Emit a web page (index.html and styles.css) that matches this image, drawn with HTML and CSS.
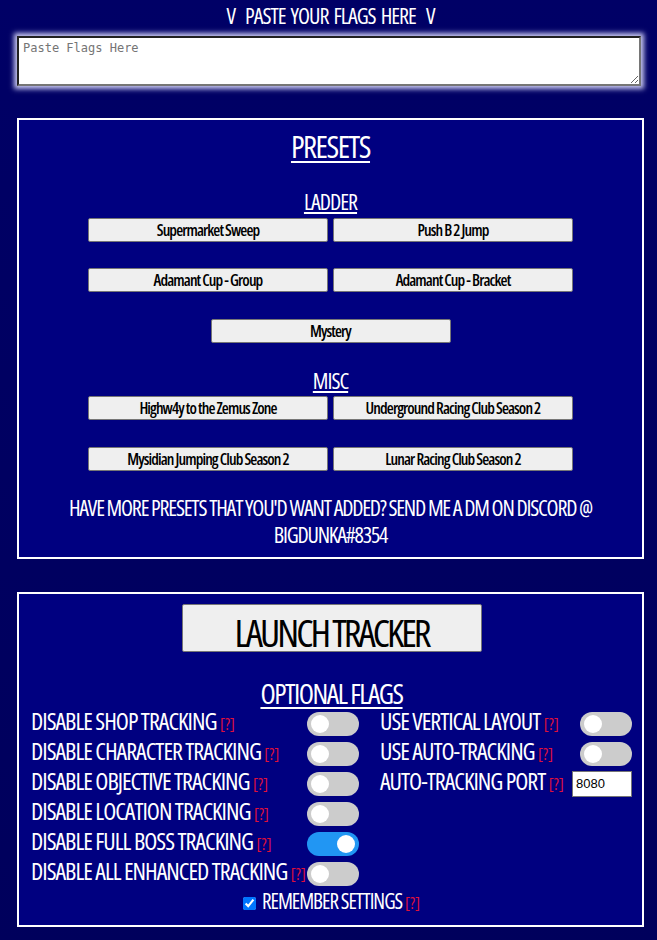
FILE: index.html
```html
<!DOCTYPE html>
<html lang="en">
<head>
    <meta charset="UTF-8">
    <meta name="viewport" content="width=device-width, initial-scale=1.0">
    <title>Tracker Launcher</title>
    <link rel="stylesheet" href="styles.css">
</head>
<body>
    <div class="paste-title">V&nbsp; PASTE YOUR FLAGS HERE &nbsp;V</div>
    <textarea class="flags-input" placeholder="Paste Flags Here"></textarea>

    <!-- presets -->
    <div class="panel presets">
        <h1>PRESETS</h1>

        <h2>LADDER</h2>
        <div class="preset-group">
            <div class="preset-row">
                <button class="preset-btn">Supermarket Sweep</button>
                <button class="preset-btn">Push B 2 Jump</button>
            </div>
            <div class="preset-row">
                <button class="preset-btn">Adamant Cup - Group</button>
                <button class="preset-btn">Adamant Cup - Bracket</button>
            </div>
            <div class="preset-row">
                <button class="preset-btn">Mystery</button>
            </div>
        </div>

        <h2>MISC</h2>
        <div class="preset-group">
            <div class="preset-row">
                <button class="preset-btn">Highw4y to the Zemus Zone</button>
                <button class="preset-btn">Underground Racing Club Season 2</button>
            </div>
            <div class="preset-row">
                <button class="preset-btn">Mysidian Jumping Club Season 2</button>
                <button class="preset-btn">Lunar Racing Club Season 2</button>
            </div>
        </div>

        <p class="more-presets">HAVE MORE PRESETS THAT YOU'D WANT ADDED? SEND ME A DM ON DISCORD @ BIGDUNKA#8354</p>
    </div>

    <!-- launch + options -->
    <div class="panel launcher">
        <button class="launch-btn">LAUNCH TRACKER</button>

        <h1 class="flags-title">OPTIONAL FLAGS</h1>

        <div class="options">
            <div class="option-col">
                <div class="option">
                    <span class="label">DISABLE SHOP TRACKING <span class="help">[?]</span></span>
                    <label class="switch"><input type="checkbox"><span class="slider"></span></label>
                </div>
                <div class="option">
                    <span class="label">DISABLE CHARACTER TRACKING <span class="help">[?]</span></span>
                    <label class="switch"><input type="checkbox"><span class="slider"></span></label>
                </div>
                <div class="option">
                    <span class="label">DISABLE OBJECTIVE TRACKING <span class="help">[?]</span></span>
                    <label class="switch"><input type="checkbox"><span class="slider"></span></label>
                </div>
                <div class="option">
                    <span class="label">DISABLE LOCATION TRACKING <span class="help">[?]</span></span>
                    <label class="switch"><input type="checkbox"><span class="slider"></span></label>
                </div>
                <div class="option">
                    <span class="label">DISABLE FULL BOSS TRACKING <span class="help">[?]</span></span>
                    <label class="switch"><input type="checkbox" checked><span class="slider"></span></label>
                </div>
                <div class="option">
                    <span class="label">DISABLE ALL ENHANCED TRACKING <span class="help">[?]</span></span>
                    <label class="switch"><input type="checkbox"><span class="slider"></span></label>
                </div>
            </div>
            <div class="option-col right">
                <div class="option">
                    <span class="label">USE VERTICAL LAYOUT <span class="help">[?]</span></span>
                    <label class="switch"><input type="checkbox"><span class="slider"></span></label>
                </div>
                <div class="option">
                    <span class="label">USE AUTO-TRACKING <span class="help">[?]</span></span>
                    <label class="switch"><input type="checkbox"><span class="slider"></span></label>
                </div>
                <div class="option">
                    <span class="label">AUTO-TRACKING PORT <span class="help">[?]</span></span>
                    <input class="port" type="text" value="8080">
                </div>
            </div>
        </div>

        <div class="remember">
            <input type="checkbox" checked>
            <span class="label">REMEMBER SETTINGS <span class="help">[?]</span></span>
        </div>
    </div>
</body>
</html>
```

FILE: styles.css
```css
* {
    box-sizing: border-box;
}

body {
    margin: 0;
    padding: 0 13px 20px 17px;
    min-height: 100vh;
    background: linear-gradient(180deg, #000066 0%, #00005c 100%);
    color: #fff;
    font-family: "Open Sans", "Liberation Sans", sans-serif;
    font-stretch: 75%;
}

.paste-title {
    text-align: center;
    font-size: 22px;
    line-height: 30px;
    letter-spacing: -1px;
    word-spacing: 2px;
    margin-bottom: 6px;
}

.flags-input {
    display: block;
    width: 624px;
    height: 50px;
    margin: 0 0 32px 0;
    padding: 3px 4px;
    border: 2px inset #767676;
    font-family: "DejaVu Sans Mono", monospace;
    font-size: 12px;
    font-stretch: normal;
    box-shadow: 0 0 5px 3px rgba(222, 222, 255, 0.9);
    resize: vertical;
}

.flags-input::placeholder {
    color: #757575;
}

.panel {
    width: 627px;
    background: #000080;
    border: 2px solid #fff;
    text-align: center;
}

.presets {
    padding: 8px 0 9px 0;
    margin-bottom: 33px;
}

h1 {
    margin: 0;
    font-size: 31px;
    font-weight: normal;
    letter-spacing: -1.5px;
    line-height: 36px;
    text-decoration: underline;
    text-underline-offset: 3px;
    text-decoration-thickness: 2px;
}

h2 {
    margin: 24px 0 3.5px 0;
    font-size: 22px;
    font-weight: normal;
    letter-spacing: -1px;
    line-height: 26px;
    text-decoration: underline;
    text-underline-offset: 2px;
    text-decoration-thickness: 2px;
}

.preset-group {
    display: flex;
    flex-direction: column;
    gap: 26.5px;
}

.preset-row {
    display: flex;
    justify-content: center;
    gap: 5px;
}

.preset-btn {
    width: 240px;
    height: 24px;
    padding: 0;
    background: #efefef;
    border: 1px solid #767676;
    border-radius: 2px;
    color: #000;
    font-family: inherit;
    font-stretch: 75%;
    font-weight: 600;
    font-size: 16px;
    letter-spacing: -0.9px;
}

.more-presets {
    margin: 23px 0 0 0;
    padding: 0 10px;
    font-size: 22px;
    line-height: 27px;
    letter-spacing: -1.2px;
}

.launcher {
    padding: 10px 10px 6px 12px;
}

.launch-btn {
    width: 300px;
    height: 48px;
    padding: 0;
    background: #efefef;
    border: 1px solid #767676;
    border-radius: 2px;
    color: #000;
    font-family: inherit;
    font-stretch: 75%;
    font-weight: 500;
    font-size: 39px;
    letter-spacing: -3px;
}

.flags-title {
    margin-top: 25px;
    font-size: 28px;
    line-height: 32px;
}

.options {
    display: flex;
    gap: 21px;
    text-align: left;
}

.option-col {
    width: 328px;
}

.option-col.right {
    width: 252px;
}

.option {
    display: flex;
    align-items: center;
    justify-content: space-between;
    height: 30px;
}

.label {
    font-size: 24px;
    line-height: 28px;
    letter-spacing: -1px;
    white-space: nowrap;
    margin-top: -3px;
}

.help {
    color: #e0103a;
    font-size: 16px;
    letter-spacing: 0;
}

.switch {
    position: relative;
    display: inline-block;
    width: 52px;
    height: 24px;
    flex: none;
}

.switch input {
    opacity: 0;
    width: 0;
    height: 0;
}

.slider {
    position: absolute;
    inset: 0;
    background: #ccc;
    border-radius: 12px;
}

.slider::before {
    content: '';
    position: absolute;
    width: 18px;
    height: 18px;
    left: 4px;
    top: 3px;
    background: #fff;
    border-radius: 50%;
}

.switch input:checked + .slider {
    background: #2196f3;
}

.switch input:checked + .slider::before {
    transform: translateX(26px);
}

.port {
    width: 60px;
    height: 26px;
    padding: 1px 3px;
    border: 1px solid #767676;
    font-family: "Liberation Sans", Arial, sans-serif;
    font-stretch: normal;
    font-size: 13px;
}

.remember {
    display: flex;
    justify-content: center;
    align-items: center;
    gap: 6px;
    height: 30px;
}

.remember input {
    margin: 0;
    width: 13px;
    height: 13px;
}

.remember .label {
    font-size: 21px;
    margin-left: 0;
}
```
